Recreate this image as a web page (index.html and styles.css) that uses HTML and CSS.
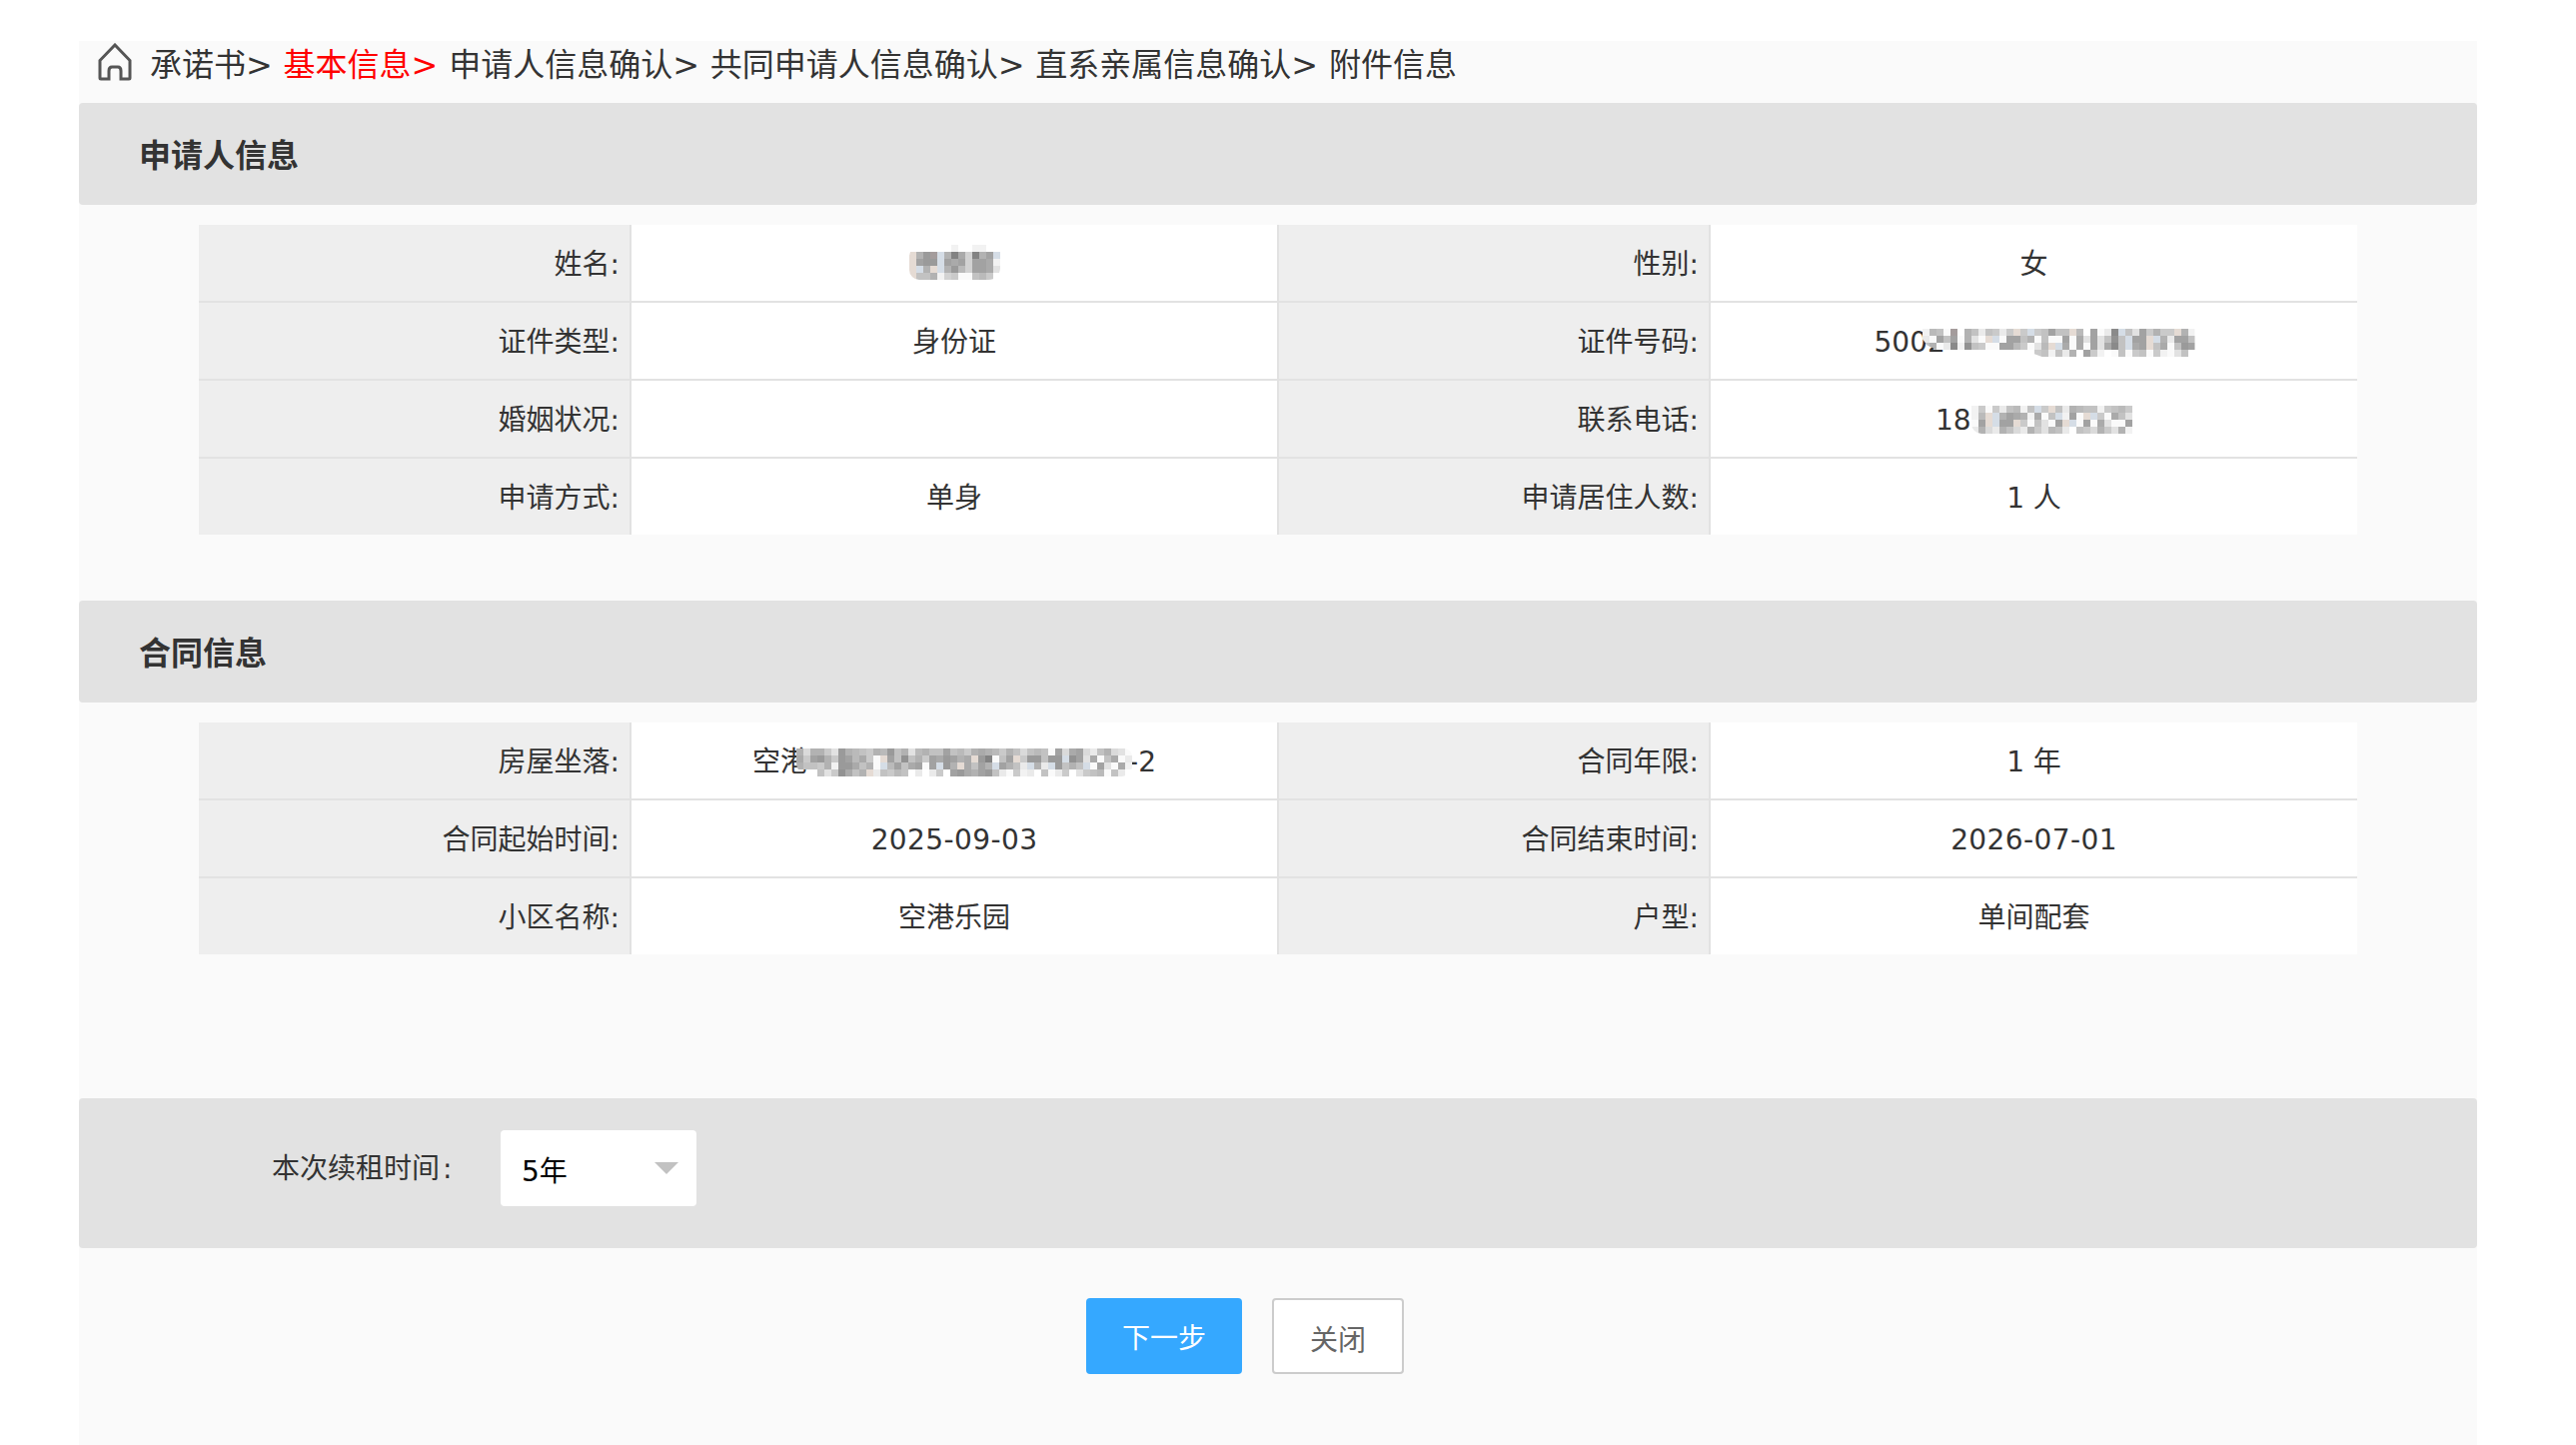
FILE: index.html
```
<!DOCTYPE html>
<html lang="zh-CN">

<head>
    <meta charset="UTF-8">
    <meta name="viewport" content="width=device-width, initial-scale=1.0">
    <title>基本信息</title>
    <link rel="stylesheet" href="styles.css">
    <script src="mosaic.js" defer></script>
</head>

<body>
    <div class="page">
        <div class="crumbs">
            <svg class="home" viewBox="0 0 34 38">
                <path d="M17 2 L2 17.5 V35 Q2 36 3 36 H11 V28 Q11 24 14 24 H20 Q23 24 23 28 V36 H31 Q32 36 32 35 V17.5 Z" />
            </svg>
            <div class="crumbs__text">承诺书&gt; <span class="active">基本信息&gt;</span> 申请人信息确认&gt; 共同申请人信息确认&gt; 直系亲属信息确认&gt; 附件信息</div>
        </div>

        <h2 class="title">申请人信息</h2>
        <div class="info info--applicant">
            <div class="row">
                <div class="label">姓名:</div>
                <div class="value"><span class="masked masked--name"><svg class="mosaic" data-mask="name"></svg></span></div>
                <div class="label">性别:</div>
                <div class="value">女</div>
            </div>
            <div class="row">
                <div class="label">证件类型:</div>
                <div class="value">身份证</div>
                <div class="label">证件号码:</div>
                <div class="value"><span class="masked masked--id">5002<svg class="mosaic" data-mask="id"></svg></span></div>
            </div>
            <div class="row">
                <div class="label">婚姻状况:</div>
                <div class="value"></div>
                <div class="label">联系电话:</div>
                <div class="value"><span class="masked masked--phone">18<svg class="mosaic" data-mask="phone"></svg></span></div>
            </div>
            <div class="row">
                <div class="label">申请方式:</div>
                <div class="value">单身</div>
                <div class="label">申请居住人数:</div>
                <div class="value">1 人</div>
            </div>
        </div>

        <h2 class="title">合同信息</h2>
        <div class="info info--contract">
            <div class="row">
                <div class="label">房屋坐落:</div>
                <div class="value"><span class="masked masked--address"><span>空港</span><span>-2</span><svg class="mosaic" data-mask="address"></svg></span></div>
                <div class="label">合同年限:</div>
                <div class="value">1 年</div>
            </div>
            <div class="row">
                <div class="label">合同起始时间:</div>
                <div class="value date">2025-09-03</div>
                <div class="label">合同结束时间:</div>
                <div class="value date">2026-07-01</div>
            </div>
            <div class="row">
                <div class="label">小区名称:</div>
                <div class="value">空港乐园</div>
                <div class="label">户型:</div>
                <div class="value">单间配套</div>
            </div>
        </div>

        <div class="renew">
            <div class="renew__label">本次续租时间<span class="colon">:</span></div>
            <div class="select">
                <span>5年</span>
                <i class="arrow"></i>
            </div>
        </div>

        <div class="buttons">
            <button class="btn btn--next">下一步</button>
            <button class="btn btn--close">关闭</button>
        </div>
    </div>
</body>

</html>
```
FILE: styles.css
```
*,
*::before,
*::after {
    box-sizing: border-box;
}

body {
    margin: 0;
    background: #fff;
    color: #333;
    font-family: "DejaVu Sans", "Noto Sans CJK SC", sans-serif;
    font-size: 28px;
}

.page {
    width: 2400px;
    height: 1405px;
    margin: 41px 0 0 79px;
    background: #fafafa;
}

/* breadcrumbs */
.crumbs {
    display: flex;
    align-items: flex-start;
    height: 62px;
    padding-left: 19px;
}

.home {
    width: 34px;
    height: 38px;
    margin-top: 2px;
    fill: none;
    stroke: #555;
    stroke-width: 3;
}

.crumbs__text {
    margin-left: 18px;
    font-size: 32px;
    line-height: 48px;
    word-spacing: 0.6px;
    white-space: nowrap;
}

.active {
    color: #f00;
}

/* section title */
.title {
    height: 102px;
    margin: 0;
    padding-left: 60px;
    border-radius: 4px;
    background: #e2e2e2;
    font-size: 32px;
    font-weight: bold;
    line-height: 107px;
}

/* info table */
.info {
    width: 2160px;
    margin: 20px 120px 0;
}

.info--applicant {
    margin-bottom: 66px;
}

.info--contract {
    margin-bottom: 144px;
}

.row {
    display: flex;
    height: 78px;
    border-bottom: 2px solid #e2e2e2;
    line-height: 80px;
}

.row:last-child {
    height: 76px;
    border-bottom: 0;
}

.label {
    width: 433px;
    padding-right: 10px;
    border-right: 2px solid #e2e2e2;
    background: #eee;
    text-align: right;
}

.value {
    width: 648px;
    border-right: 2px solid #e2e2e2;
    background: #fff;
    text-align: center;
}

.value + .label {
    width: 432px;
}

.value:last-child {
    width: 647px;
    border-right: 0;
}

.date {
    letter-spacing: 0.4px;
}

/* masked values */
.masked {
    display: inline-flex;
    position: relative;
    height: 76px;
    vertical-align: top;
    text-align: left;
}

.mosaic {
    position: absolute;
}

.masked--name {
    width: 92px;
}

.masked--name .mosaic {
    top: 20px;
    left: 1px;
    border-radius: 12px 0 12px 10px;
}

.masked--id {
    width: 320px;
}

.masked--id .mosaic {
    top: 26px;
    left: 48px;
    clip-path: polygon(0 0, 100% 0, 100% 100%, 44% 100%, 38% 78%, 6% 78%, 2% 60%, 0 35%);
}

.masked--phone {
    width: 197px;
}

.masked--phone .mosaic {
    top: 25px;
    left: 36px;
    border-bottom-left-radius: 10px;
}

.masked--address {
    justify-content: space-between;
    width: 404px;
}

.masked--address .mosaic {
    top: 26px;
    left: 44px;
    border-radius: 0 8px 10px 14px;
}

/* renew period */
.renew {
    display: flex;
    align-items: flex-start;
    height: 150px;
    padding: 32px 0 0 193px;
    border-radius: 4px;
    background: #e2e2e2;
}

.renew__label {
    width: 229px;
    line-height: 78px;
    white-space: nowrap;
}

.colon {
    margin-left: 3px;
}

.select {
    display: flex;
    align-items: center;
    justify-content: space-between;
    width: 196px;
    height: 76px;
    padding: 2px 18px 0 21px;
    border-radius: 4px;
    background: #fff;
    color: #000;
}

.arrow {
    margin-top: -2px;
    border: 12px solid transparent;
    border-top-color: #c2c2c2;
    border-bottom: 0;
}

/* buttons */
.buttons {
    display: flex;
    gap: 30px;
    padding: 50px 0 0 1008px;
}

.btn {
    height: 76px;
    padding: 0;
    border: 0;
    border-radius: 4px;
    font-family: inherit;
    font-size: 28px;
}

.btn--next {
    width: 156px;
    background: #35a8ff;
    color: #fff;
}

.btn--close {
    width: 132px;
    padding-top: 3px;
    border: 2px solid #ccc;
    background: #fff;
    color: #666;
}
```
FILE: mosaic.js
```
// one char = one 7px cell: hex digit is a gray level, other letters are tints
const CELL = 7;
const TINTS = {
    r: '#a49c9c',
    w: '#e5dbd4',
    t: '#d5dde6'
};

const masks = {
    name: [
        '......e..ee..',
        'w63rt605a064t',
        'w433t454a445e',
        'wt6wt637a445c',
        'w886ea9ff879.'
    ],
    id: [
        'e78fr.68d89d9w9t98488w7.4fd1t8c49699w6e',
        'df484f6cfwtf4486f8ff4f5c4c828t44wt6d448',
        '86fd1e289ff4479fc7wt5f5f4c518t54w85f834',
        '................98e8d6.49e.f8f98f9efc8.'
    ],
    phone: [
        'e9f9d87e8t9w8d6788e9879',
        'e7wt6456e5f8te4fwt9f58c',
        'f4wt44w9f8cf4wtf4f5cff4',
        'd6bd68bd69c78d.89b69c6e'
    ],
    address: [
        '6b669c3678967386c768848796567968b878f4b54bd86bcf',
        '59436934759fw482869453465w30f84w933833t24c5f85fd',
        '68896e33586ft74854f4t36w5846t468dt6dt3868tf4cf5e',
        '...8c92586wd8978.d.d9.4356438df9ed.8fd9.c987f8d.'
    ]
};

function cellColor(c) {
    if (TINTS[c]) return TINTS[c];
    const g = 130 + parseInt(c, 16) * 8;
    return `rgb(${g}, ${g}, ${g})`;
}

document.querySelectorAll('.mosaic').forEach((svg) => {
    const rows = masks[svg.dataset.mask];
    svg.setAttribute('width', rows[0].length * CELL);
    svg.setAttribute('height', rows.length * CELL);

    rows.forEach((row, y) => {
        [...row].forEach((c, x) => {
            if (c === '.') return;
            const rect = document.createElementNS('http://www.w3.org/2000/svg', 'rect');
            rect.setAttribute('x', x * CELL);
            rect.setAttribute('y', y * CELL);
            rect.setAttribute('width', CELL);
            rect.setAttribute('height', CELL);
            rect.setAttribute('fill', cellColor(c));
            svg.appendChild(rect);
        });
    });
});
```
